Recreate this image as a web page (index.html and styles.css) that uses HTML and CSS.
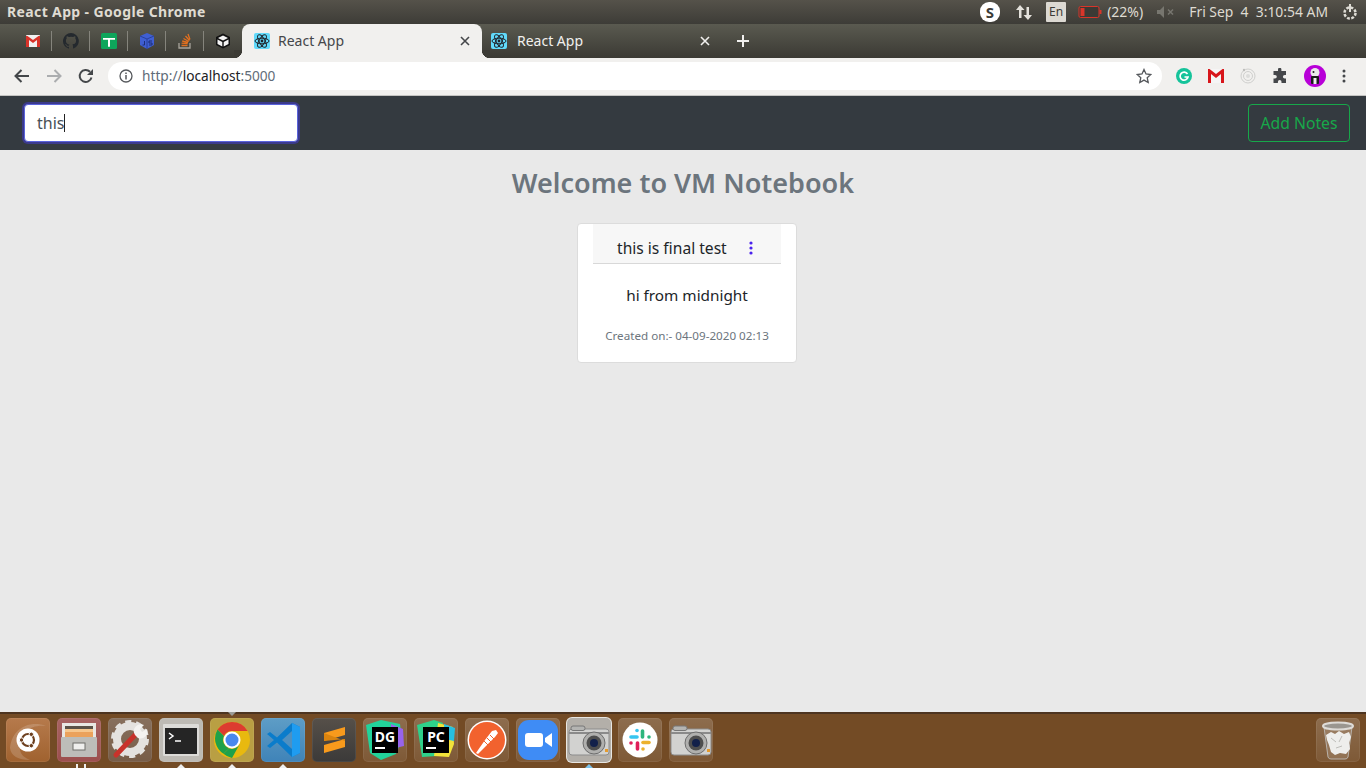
FILE: index.html
```html
<!DOCTYPE html>
<html lang="en">
<head>
    <meta charset="UTF-8">
    <meta name="viewport" content="width=device-width, initial-scale=1.0">
    <title>React App</title>
    <link rel="stylesheet" href="styles.css">
</head>
<body>
    <svg class="defs" width="0" height="0">
        <symbol id="react" viewBox="0 0 16 16">
            <rect width="16" height="16" rx="2" fill="#61dafb"/>
            <g fill="none" stroke="#20232a" stroke-width="1">
                <ellipse cx="8" cy="8" rx="7" ry="2.8"/>
                <ellipse cx="8" cy="8" rx="7" ry="2.8" transform="rotate(60 8 8)"/>
                <ellipse cx="8" cy="8" rx="7" ry="2.8" transform="rotate(120 8 8)"/>
            </g>
            <circle cx="8" cy="8" r="1.4" fill="#20232a"/>
        </symbol>
        <symbol id="close" viewBox="0 0 10 10">
            <path d="M1 1l8 8M9 1l-8 8" stroke="currentColor" stroke-width="1.6" fill="none"/>
        </symbol>
        <symbol id="camera" viewBox="0 0 44 44">
            <rect x="2" y="11" width="40" height="26" rx="3" fill="#d2d2d0" stroke="#8d8d8d"/>
            <rect x="4" y="8" width="14" height="4.500" rx="2" fill="#b4b4b2" stroke="#777"/>
            <rect x="2" y="14" width="40" height="2" fill="#8a8a8a"/>
            <circle cx="27" cy="25" r="11" fill="#b0b0ae" stroke="#6d6d6d"/>
            <circle cx="27" cy="25" r="7.500" fill="#4e4e4e"/>
            <circle cx="27" cy="25" r="4" fill="#12204a"/>
            <rect x="38" y="31" width="3" height="3" fill="#e59a2c"/>
        </symbol>
    </svg>

    <header class="titlebar">
        <span class="window-title">React App - Google Chrome</span>
        <div class="tray">
            <svg class="tray-skype" width="22" height="22" viewBox="0 0 22 22"><rect x="1" y="1" width="20" height="20" rx="9" fill="#fff"/><text x="11" y="16.5" text-anchor="middle" class="skype-s">S</text></svg>
            <svg class="tray-arrows" width="18" height="20" viewBox="0 0 18 20"><path d="M5 3L1 8h3v8h2.500V8h3zM13 18l4-5h-3V5h-2.500v8h-3z" fill="#e4e2dc"/></svg>
            <span class="tray-lang">En</span>
            <svg class="tray-battery" width="24" height="14" viewBox="0 0 24 14"><rect x="1" y="1.500" width="20" height="11" rx="1.500" fill="#3b3a35" stroke="#d8352a"/><rect x="2.500" y="3" width="4" height="8" fill="#d8352a"/><rect x="21.500" y="5" width="2" height="4" fill="#d8352a"/></svg>
            <span class="tray-text tray-percent">(22%)</span>
            <svg class="tray-mute" width="18" height="12" viewBox="0 0 18 12"><path d="M0 4h3l4-4v12l-4-4H0z" fill="#77766f"/><path d="M11 3.500l5 5M16 3.500l-5 5" stroke="#77766f" stroke-width="1.500"/></svg>
            <span class="tray-text tray-clock">Fri Sep&nbsp; 4&nbsp; 3:10:54 AM</span>
            <svg class="tray-power" width="18" height="18" viewBox="0 0 18 18"><circle cx="9" cy="10" r="5.500" fill="none" stroke="#dedcd5" stroke-width="2.500" stroke-dasharray="2.800 1.500"/><path d="M9 1v8" stroke="#dedcd5" stroke-width="2"/></svg>
        </div>
    </header>

    <div class="tabstrip">
        <div class="pinned">
            <div class="pin"><svg width="14" height="12" viewBox="0 0 14 12"><rect width="14" height="12" rx="1" fill="#f1f1f1"/><path d="M0 1v11h3V5l4 3 4-3v7h3V1h-1.500L7 5 1.500 1z" fill="#d8332a"/></svg></div>
            <div class="pin"><svg width="16" height="16" viewBox="0 0 16 16"><path fill="#24292e" d="M8 0a8 8 0 0 0-2.500 15.600c.4.100.5-.2.500-.4v-1.400c-2.200.5-2.700-1-2.700-1-.4-.9-.9-1.200-.9-1.200-.7-.5.100-.5.100-.5.800.1 1.200.8 1.200.8.700 1.200 1.900.9 2.300.7.100-.5.300-.9.500-1.100-1.800-.2-3.600-.9-3.600-4 0-.9.300-1.600.8-2.100-.1-.2-.4-1 .1-2.100 0 0 .7-.2 2.200.8a7.600 7.600 0 0 1 4 0c1.500-1 2.200-.8 2.200-.8.400 1.100.2 1.900.1 2.100.5.600.8 1.300.8 2.100 0 3.100-1.900 3.700-3.700 3.900.3.300.6.800.6 1.500v2.200c0 .2.100.5.600.4A8 8 0 0 0 8 0z"/></svg></div>
            <div class="pin"><svg width="16" height="16" viewBox="0 0 16 16"><rect width="16" height="16" rx="1.500" fill="#0ea55b"/><path d="M2 5h12v1.800H9v7H7v-7H2z" fill="#fff"/></svg></div>
            <div class="pin"><svg width="16" height="16" viewBox="0 0 16 16"><path d="M8 0l7 3v9l-7 4-7-4V3z" fill="#3f5fd2"/><path d="M1 3l7 3 7-3M8 6v10" stroke="#24398e" stroke-width=".8" fill="none"/><path d="M5.500 8v4H3.500M13 8h-3v2h3v2h-3" stroke="#1e2f78" fill="none"/></svg></div>
            <div class="pin"><svg width="16" height="16" viewBox="0 0 16 16"><path d="M2 10v5h11v-5" stroke="#a8a49b" stroke-width="1.300" fill="none"/><path d="M4.500 12.500h6M4.600 10.200l6 .5M5.200 8l5.800 1.500M6.500 5.500l5.200 3M8.500 3l4 4.500M11 1l2 5.500" stroke="#e2701f" stroke-width="1.300" fill="none"/></svg></div>
            <div class="pin"><svg width="16" height="16" viewBox="0 0 16 16"><path d="M8 .5l7 3.500v8l-7 3.500-7-3.500V4z" fill="#111"/><path d="M8 2.500L13 5 8 7.500 3 5zM2.500 6.500l4.800 2.400v4.500l-4.800-2.400zM13.500 6.500v4.500l-4.800 2.400V8.900z" fill="#f4f4f4"/></svg></div>
        </div>
        <div class="tab tab-active">
            <svg class="favicon" width="16" height="16"><use href="#react"/></svg>
            <span class="tab-title">React App</span>
            <svg class="tab-close" width="10" height="10"><use href="#close"/></svg>
        </div>
        <div class="tab">
            <svg class="favicon" width="16" height="16"><use href="#react"/></svg>
            <span class="tab-title">React App</span>
            <svg class="tab-close" width="10" height="10"><use href="#close"/></svg>
        </div>
        <svg class="new-tab" width="12" height="12" viewBox="0 0 12 12"><path d="M6 0v12M0 6h12" stroke="#f1f0ee" stroke-width="2"/></svg>
    </div>

    <div class="toolbar">
        <svg class="tool" width="16" height="14" viewBox="0 0 16 14"><path d="M15 7H2M7.500 1L1.500 7l6 6" fill="none" stroke="#44474a" stroke-width="2"/></svg>
        <svg class="tool" width="16" height="14" viewBox="0 0 16 14"><path d="M1 7h13M8.500 1l6 6-6 6" fill="none" stroke="#abadaf" stroke-width="2"/></svg>
        <svg class="tool" width="16" height="16" viewBox="0 0 16 16"><path d="M13.500 9.500A6 6 0 1 1 12 3.800" fill="none" stroke="#44474a" stroke-width="2"/><path d="M15 1v6H9z" fill="#44474a"/></svg>
        <div class="omnibox">
            <svg width="14" height="14" viewBox="0 0 14 14"><circle cx="7" cy="7" r="6" fill="none" stroke="#55585c" stroke-width="1.300"/><path d="M7 6v4.500M7 3.500v1.500" stroke="#55585c" stroke-width="1.500"/></svg>
            <span class="url"><span class="url-scheme">http://</span>localhost<span class="url-scheme">:5000</span></span>
            <svg class="star" width="16" height="16" viewBox="0 0 16 16"><path d="M8 1.500l2 4.500 4.800.5-3.600 3.200 1 4.800L8 12.100l-4.200 2.400 1-4.800L1.200 6.500 6 6z" fill="none" stroke="#55585c" stroke-width="1.300"/></svg>
        </div>
        <div class="extensions">
            <svg width="16" height="16" viewBox="0 0 16 16"><circle cx="8" cy="8" r="8" fill="#15c39a"/><path d="M11.500 6A4 4 0 1 0 12 9H8.500" fill="none" stroke="#fff" stroke-width="1.700"/></svg>
            <svg width="16" height="14" viewBox="0 0 16 14"><rect width="16" height="14" fill="#f5f5f5"/><path d="M0 0v14h3V5l5 4 5-4v9h3V0h-1.500L8 5 1.500 0z" fill="#d8161b"/></svg>
            <svg width="16" height="16" viewBox="0 0 16 16"><g fill="none" stroke="#cfcfcd"><circle cx="8" cy="8" r="7"/><circle cx="8" cy="8" r="4.500"/></g><circle cx="8" cy="8" r="2" fill="#dcdcda"/><circle cx="4" cy="2" r="1.200" fill="#bdbdbb"/></svg>
            <svg width="16" height="16" viewBox="0 0 16 16"><path d="M6 1.500a1.700 1.700 0 0 1 3.400 0V3H14v4h-1.300a1.800 1.800 0 0 0 0 3.600H14V15H9.500v-1.300a1.800 1.800 0 0 0-3.600 0V15H1.500v-4.400H3a1.800 1.800 0 0 0 0-3.600H1.500V3H6z" fill="#45474a"/></svg>
            <svg width="22" height="22" viewBox="0 0 22 22"><circle cx="11" cy="11" r="11" fill="#b800d8"/><circle cx="11" cy="7.500" r="4.500" fill="#e9e9e9"/><rect x="7" y="11" width="8" height="8" rx="1" fill="#1b1b1b"/><rect x="9.500" y="13" width="3" height="6" fill="#eee"/><circle cx="9.500" cy="7" r="1" fill="#222"/></svg>
            <svg width="4" height="14" viewBox="0 0 4 14"><circle cx="2" cy="2" r="1.500" fill="#45474a"/><circle cx="2" cy="7" r="1.500" fill="#45474a"/><circle cx="2" cy="12" r="1.500" fill="#45474a"/></svg>
        </div>
    </div>

    <nav class="app-nav">
        <div class="search"><span>this</span><span class="caret"></span></div>
        <button class="add-notes">Add Notes</button>
    </nav>

    <main class="content">
        <h1 class="welcome">Welcome to VM Notebook</h1>
        <div class="notes">
            <div class="note-card">
                <div class="note-header">
                    <span class="note-title">this is final test</span>
                    <svg class="note-menu" width="4" height="14" viewBox="0 0 4 14"><circle cx="2" cy="2" r="1.600" fill="#4a22ee"/><circle cx="2" cy="7" r="1.600" fill="#4a22ee"/><circle cx="2" cy="12" r="1.600" fill="#4a22ee"/></svg>
                </div>
                <p class="note-body">hi from midnight</p>
                <p class="note-date">Created on:- 04-09-2020 02:13</p>
            </div>
        </div>
    </main>

    <footer class="dock">
        <div class="tile tile-ubuntu">
            <svg width="44" height="44" viewBox="0 0 44 44"><path d="M4 30C6 10 24 2 40 8 26 6 12 14 14 32 15 38 20 40 24 42 12 42 5 38 4 30z" fill="#ffffff2a"/><circle cx="22" cy="22" r="11.500" fill="#fff"/><circle cx="22" cy="22" r="6" fill="none" stroke="#6d3f1e" stroke-width="2.200"/><g fill="#6d3f1e" stroke="#fff"><circle cx="15.500" cy="22" r="2.200"/><circle cx="25.300" cy="16.300" r="2.200"/><circle cx="25.300" cy="27.700" r="2.200"/></g></svg>
        </div>
        <div class="tile tile-files running-double">
            <svg width="40" height="40" viewBox="0 0 40 40"><rect x="3" y="3" width="34" height="15" fill="#e9e7e3"/><rect x="6" y="6" width="28" height="11" fill="#5b5147"/><rect x="6" y="9" width="28" height="3" fill="#f6c78e"/><rect x="6" y="12" width="28" height="5" fill="#eba25c"/><rect x="2" y="17" width="36" height="20" rx="1" fill="#bdbdb9"/><rect x="14" y="23" width="12" height="7" fill="#efefed" stroke="#6f6f6b"/></svg>
        </div>
        <div class="tile tile-settings">
            <svg width="44" height="44" viewBox="0 0 44 44"><circle cx="22" cy="21" r="13" fill="none" stroke="#e4e2df" stroke-width="8"/><circle cx="22" cy="21" r="17" fill="none" stroke="#e4e2df" stroke-width="4" stroke-dasharray="6 4.700"/><path d="M8 37L29 15" stroke="#c8322b" stroke-width="5" stroke-linecap="round"/><path d="M27 17a7 7 0 0 1 9-10l-4 4 2 3 5-3a7 7 0 0 1-9 9z" fill="#f4f3f1"/></svg>
        </div>
        <div class="tile tile-terminal running">
            <svg width="40" height="40" viewBox="0 0 40 40"><rect x="2" y="4" width="36" height="32" rx="1" fill="#dcdbd8"/><rect x="4" y="8" width="32" height="26" fill="#252525"/><path d="M8 13l4 3-4 3" stroke="#fff" stroke-width="1.500" fill="none"/><path d="M14 21h6" stroke="#fff" stroke-width="1.500"/></svg>
        </div>
        <div class="tile tile-chrome running running-top">
            <svg width="40" height="40" viewBox="0 0 40 40"><circle cx="20" cy="20" r="18" fill="#e8b90f"/><path d="M20 2a18 18 0 0 1 15.600 9H20a9 9 0 0 0-8 5L5.500 9.500A18 18 0 0 1 20 2z" fill="#dc3c30"/><path d="M5.500 9.500L12 16a9 9 0 0 0 5 12.500l-5.500 5.300A18 18 0 0 1 5.500 9.500z" fill="#1fa14a"/><path d="M17 28.500a9 9 0 0 0 10.500-4L20 38a18 18 0 0 1-8.500-4.200z" fill="#1fa14a"/><circle cx="20" cy="20" r="8.500" fill="#fff"/><circle cx="20" cy="20" r="6.500" fill="#4a88ee"/></svg>
        </div>
        <div class="tile tile-vscode running">
            <svg width="40" height="40" viewBox="0 0 40 40"><path d="M29 3l8 4v26l-8 4-15-14.500-7 5.500-3-2 7-6-7-6 3-2 7 5.500z" fill="#0a7ccb"/><path d="M29 3l8 4v26l-8 4z" fill="#1f9cf0"/><path d="M29 11v18l-10-9z" fill="#4f90c0"/></svg>
        </div>
        <div class="tile tile-sublime">
            <svg width="40" height="40" viewBox="0 0 40 40"><path d="M31 7v8L10 21v-8z" fill="#f89a1c"/><path d="M31 19v8L10 33v-8z" fill="#f89a1c"/><path d="M10 13l21 8v-2L10 21z" fill="#d9830f"/></svg>
        </div>
        <div class="tile">
            <svg width="44" height="44" viewBox="0 0 44 44"><path d="M3 7l15-5 19 4 2 15-6 15-15 6-11-7z" fill="#22d39a"/><path d="M28 6l12 5 1 17-13 3z" fill="#9763ec"/><rect x="9" y="9" width="26" height="26" fill="#000"/><text x="22" y="24" text-anchor="middle" class="jb-text">DG</text><rect x="12" y="29" width="10" height="2" fill="#fff"/></svg>
        </div>
        <div class="tile">
            <svg width="44" height="44" viewBox="0 0 44 44"><path d="M3 7l17-5 9 3-6 33-15 1z" fill="#2ed08a"/><path d="M24 5l15 4 1 17-5 13-15-1z" fill="#f2e33a"/><path d="M30 6l11 4-1 13-9-2z" fill="#26bfe0"/><rect x="9" y="9" width="26" height="26" fill="#000"/><text x="22" y="24" text-anchor="middle" class="jb-text">PC</text><rect x="12" y="29" width="10" height="2" fill="#fff"/></svg>
        </div>
        <div class="tile">
            <svg width="40" height="40" viewBox="0 0 40 40"><circle cx="20" cy="20" r="19.500" fill="#fff"/><circle cx="20" cy="20" r="18" fill="#f2622e"/><path d="M9 33l9-13 7-9 4-1 2 3-3 4-7 7-10 10z" fill="#fff"/><path d="M17 21l5 5M20 18l5 5M23 15l4 4" stroke="#f2622e"/></svg>
        </div>
        <div class="tile">
            <svg width="40" height="40" viewBox="0 0 40 40"><rect x="0" y="0" width="40" height="40" rx="11" fill="#3f8cf5"/><rect x="7" y="13" width="18" height="14" rx="3" fill="#fff"/><path d="M27 18l7-5v14l-7-5z" fill="#fff"/></svg>
        </div>
        <div class="tile tile-active running-blue">
            <svg width="44" height="44"><use href="#camera"/></svg>
        </div>
        <div class="tile">
            <svg width="36" height="36" viewBox="0 0 36 36"><circle cx="18" cy="18" r="17.500" fill="#fff"/><g stroke-width="3.600" stroke-linecap="round"><path d="M9 15h6" stroke="#36c5f0"/><path d="M15 8.500v0" stroke="#36c5f0"/><path d="M20.500 9v6" stroke="#2eb67d"/><path d="M27 15h0" stroke="#2eb67d"/><path d="M21 20.500h6" stroke="#ecb22e"/><path d="M21 27h0" stroke="#ecb22e"/><path d="M15.500 21v6" stroke="#e01e5a"/><path d="M9 21h0" stroke="#e01e5a"/></g></svg>
        </div>
        <div class="tile">
            <svg width="44" height="44"><use href="#camera"/></svg>
        </div>
        <div class="tile tile-trash">
            <svg width="44" height="44" viewBox="0 0 44 44"><path d="M8 9l4 30a3 3 0 0 0 3 2h14a3 3 0 0 0 3-2l4-30z" fill="#ffffff24" stroke="#b9b2ab"/><ellipse cx="22" cy="8" rx="15" ry="3.500" fill="#9a9690" stroke="#dedbd7" stroke-width="2"/><path d="M10 17l5-3 4 2 4-3 5 3 5-2 2 5-2 6 1 6-4 5-6-1-5 2-4-3-2-7-2-5z" fill="#eeeeec"/><path d="M15 20l5 4M26 18l-3 6M20 30l6-2" stroke="#bdbdb9" fill="none"/></svg>
        </div>
    </footer>
</body>
</html>
```

FILE: styles.css
```css
* {
    box-sizing: border-box;
}
body {
    margin: 0;
    height: 768px;
    display: flex;
    flex-direction: column;
    overflow: hidden;
    font-family: "Noto Sans", sans-serif;
    background-color: #e9e9e9;
}
svg {
    display: block;
    flex-shrink: 0;
}
.defs {
    position: absolute;
}

/* ubuntu top bar */
.titlebar {
    height: 24px;
    display: flex;
    align-items: center;
    padding-left: 7px;
    background: linear-gradient(#55524a, #3d3c37);
}
.window-title {
    padding-bottom: 2px;
    color: #dfdbd2;
    font-size: 14px;
    font-weight: 700;
    letter-spacing: 0.37px;
}
.tray {
    margin-left: auto;
    display: flex;
    align-items: center;
}
.tray-skype {
    margin-right: 14px;
}
.tray-arrows {
    margin-right: 13px;
}
.tray-lang {
    width: 20px;
    height: 20px;
    margin-right: 12px;
    text-align: center;
    line-height: 20px;
    font-size: 12px;
    border-radius: 1px;
    color: #3c3b37;
    background-color: #dcd9d2;
}
.skype-s {
    font-family: "Noto Sans", sans-serif;
    font-size: 15px;
    font-weight: 700;
    fill: #3c3b37;
}
.tray-battery {
    margin-right: 5px;
}
.tray-text {
    padding-bottom: 1px;
    color: #dfdbd2;
    font-size: 14px;
    white-space: nowrap;
}
.tray-percent {
    margin-right: 14px;
}
.tray-mute {
    margin-right: 14px;
}
.tray-clock {
    font-size: 13.9px;
}
.tray-power {
    margin: 0 7px 0 13px;
}

/* chrome tabs */
.tabstrip {
    height: 34px;
    display: flex;
    align-items: stretch;
    padding-left: 14px;
    background: linear-gradient(#5a5a50, #3b3a34);
}
.pinned {
    display: flex;
    padding-bottom: 7px;
    padding-top: 7px;
}
.pin {
    width: 38px;
    display: flex;
    align-items: center;
    justify-content: center;
    border-right: 1px solid #85847c;
}
.pin:last-child {
    border-right: none;
}
.tab {
    width: 240px;
    display: flex;
    align-items: center;
    padding: 0 12px 0 9px;
    color: #f1f0ee;
    font-size: 14px;
    position: relative;
}
.tab .favicon {
    margin-right: 10px;
}
.tab-active {
    padding-left: 12px;
    border-radius: 8px 8px 0 0;
    background-color: #f1f0ee;
    color: #45474a;
}
.tab-active .favicon {
    margin-right: 8px;
}
.tab-active::before,
.tab-active::after {
    content: "";
    position: absolute;
    bottom: 0;
    width: 8px;
    height: 8px;
}
.tab-active::before {
    left: -8px;
    background: radial-gradient(circle at 0 0, #3c3b35 8px, #f1f0ee 8.500px);
}
.tab-active::after {
    right: -8px;
    background: radial-gradient(circle at 100% 0, #3c3b35 8px, #f1f0ee 8.500px);
}
.tab-title {
    flex: 1;
    padding-bottom: 2px;
}
.new-tab {
    align-self: center;
    margin-left: 15px;
}

/* chrome toolbar */
.toolbar {
    height: 38px;
    display: flex;
    align-items: center;
    padding: 0 0 1px 14px;
    border-bottom: 1px solid #c4c4c2;
    background-color: #f1f0ee;
}
.tool + .tool {
    margin-left: 16px;
}
.omnibox {
    width: 1054px;
    height: 28px;
    display: flex;
    align-items: center;
    margin-left: 14px;
    padding: 0 10px 0 11px;
    border-radius: 14px;
    background-color: #fff;
}
.url {
    flex: 1;
    margin-left: 9px;
    padding-bottom: 2px;
    font-size: 13.7px;
    color: #202124;
}
.url-scheme {
    color: #5f6c78;
}
.extensions {
    display: flex;
    align-items: center;
    margin-left: 14px;
    gap: 16px;
}

/* app */
.app-nav {
    height: 54px;
    flex-shrink: 0;
    display: flex;
    align-items: center;
    justify-content: space-between;
    padding: 0 16px 0 24px;
    background-color: #343a40;
}
.search {
    width: 274px;
    height: 38px;
    display: flex;
    align-items: center;
    padding: 0 12px;
    font-size: 16px;
    color: #495057;
    border: 1px solid #5a63dc;
    border-radius: 4px;
    background-color: #fff;
    box-shadow: 0 0 0 2px #3b3a8c;
}
.caret {
    width: 1px;
    height: 18px;
    background-color: #222;
}
.add-notes {
    width: 102px;
    height: 38px;
    padding: 0;
    font-family: inherit;
    font-size: 15.7px;
    color: #17a84a;
    border: 1px solid #17a84a;
    border-radius: 4px;
    background: none;
}
.content {
    flex: 1;
    padding-top: 16px;
}
.welcome {
    margin: 0;
    text-align: center;
    font-size: 27px;
    line-height: 34px;
    font-weight: 600;
    color: #6c757d;
}
.notes {
    display: flex;
    justify-content: center;
    padding: 23px 0 0 8px;
}
.note-card {
    width: 220px;
    height: 140px;
    padding: 0 15px;
    text-align: center;
    border: 1px solid #dcdcdc;
    border-radius: 4px;
    background-color: #fff;
}
.note-header {
    height: 40px;
    display: flex;
    align-items: center;
    padding: 8px 0 0 24px;
    font-size: 15.6px;
    color: #212529;
    border-bottom: 1px solid #d8d8d8;
    background-color: #f7f7f7;
}
.note-menu {
    margin-left: 22px;
}
.note-body {
    margin: 19px 0 0;
    line-height: 24px;
    font-size: 15.3px;
    color: #212529;
}
.note-date {
    margin: 21px 0 0;
    line-height: 16px;
    font-size: 11.65px;
    color: #6c757d;
}

/* unity launcher */
.dock {
    height: 56px;
    display: flex;
    align-items: center;
    gap: 7px;
    padding: 0 6px 2px;
    border-top: 2px solid #4d3420;
    background-color: #734b25;
}
.tile {
    width: 44px;
    height: 44px;
    display: flex;
    align-items: center;
    justify-content: center;
    position: relative;
    border-radius: 5px;
    background: linear-gradient(#ffffff30, #ffffff14);
    box-shadow: inset 0 0 0 1px #ffffff12;
}
.tile-ubuntu {
    background: linear-gradient(#b67a4c, #a0622f);
}
.tile-files {
    background-color: #94403f;
}
.tile-settings {
    background-color: #6c4f38;
}
.tile-terminal {
    background: #bdbab4;
}
.tile-chrome {
    background: #b99f43;
}
.tile-vscode {
    background: linear-gradient(#5e9dc6, #3f83b8);
}
.tile-sublime {
    background: linear-gradient(#565049, #3b3a39);
}
.tile-active {
    background: #b3afa9;
    box-shadow: 0 0 0 1px #e8e6e2;
}
.tile-trash {
    margin-left: auto;
}
.running::after,
.running-blue::after,
.running-double::after {
    content: "";
    position: absolute;
    left: 50%;
    bottom: -6px;
    margin-left: -4px;
    border: 4px solid transparent;
    border-top: none;
    border-bottom: 4px solid #eee;
}
.running-blue::after {
    border-bottom-color: #7cc4ec;
}
.running-double::after {
    width: 6px;
    height: 4px;
    margin-left: -3px;
    border: none;
    border-left: 2px solid #eee;
    border-right: 2px solid #eee;
}
.running-top::before {
    content: "";
    position: absolute;
    left: 50%;
    top: -6px;
    margin-left: -4px;
    border: 4px solid transparent;
    border-bottom: none;
    border-top: 4px solid #9a9a96;
}
.jb-text {
    font-family: "Noto Sans", sans-serif;
    font-size: 14px;
    font-weight: 700;
    fill: #fff;
}
```
